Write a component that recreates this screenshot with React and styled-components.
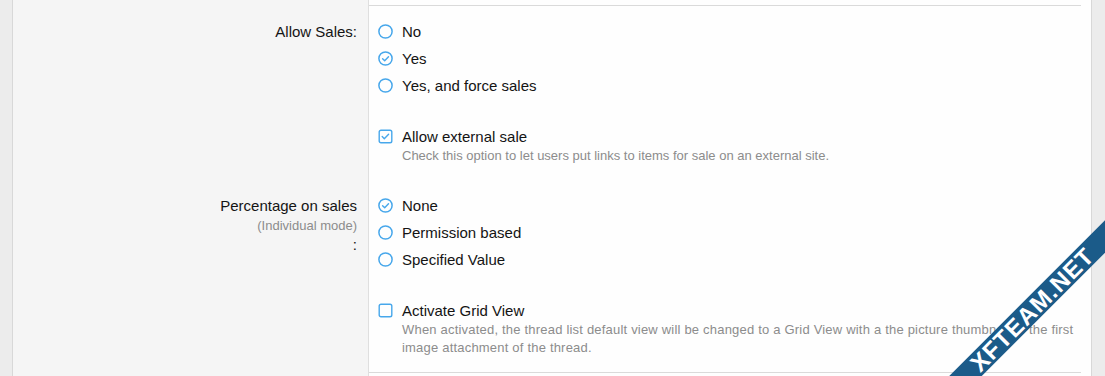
import styled, { createGlobalStyle } from "styled-components";

const GlobalStyle = createGlobalStyle`
  html, body {
    margin: 0;
    padding: 0;
    background: #ececec;
  }
  body {
    font-family: "Liberation Sans", Arial, sans-serif;
    color: #141414;
    overflow: hidden;
  }
`;

const BLUE = "#47a7eb";

const Page = styled.div`
  position: relative;
  width: 1105px;
  height: 376px;
  overflow: hidden;
  padding-left: 12px;
  box-sizing: border-box;
`;

const Block = styled.div`
  width: 1080px;
  height: 100%;
  box-sizing: border-box;
  background: #fefefe;
  border-left: 1px solid #d8d8d8;
  border-right: 1px solid #d8d8d8;
  display: flex;
  flex-direction: column;
`;

const Row = styled.div`
  display: grid;
  grid-template-columns: 356px 1fr;
  flex: ${p => (p.$grow ? "1" : "none")};
  height: ${p => (p.$h ? `${p.$h}px` : "auto")};
`;

const Term = styled.div`
  background: #f5f5f5;
  border-right: 1px solid #dfdfdf;
  box-sizing: border-box;
  padding: ${p => (p.$flat ? "0" : "12px 11px 12px 0")};
  text-align: right;
`;

const TermLabel = styled.div`
  font-size: 15px;
  line-height: 20px;
  padding-top: 4px;
`;

const TermHint = styled.div`
  font-size: 13px;
  line-height: 18px;
  color: #8c8c8c;
  margin-top: 1px;
`;

const TermColon = styled.div`
  font-size: 15px;
  line-height: 20px;
`;

const Desc = styled.div`
  padding: 12px 10px 12px 9px;
  min-width: 0;
`;

const Rule = styled.div`
  height: 1px;
  background: #dadada;
  margin-right: 10px;
`;

const ChoiceList = styled.ul`
  list-style: none;
  margin: 0;
  padding: 0;
`;

const Choice = styled.li`
  display: flex;
  align-items: flex-start;
  padding: 4px 0 3px;
`;

const IconBox = styled.svg`
  flex: none;
  width: 15px;
  height: 15px;
  margin-top: 2px;
  margin-right: 9px;
`;

const ChoiceText = styled.div`
  flex: 1;
  min-width: 0;
`;

const ChoiceLabel = styled.div`
  font-size: 15px;
  line-height: 20px;
`;

const Hint = styled.div`
  font-size: 13px;
  line-height: 18px;
  color: #8c8c8c;
  letter-spacing: ${p => (p.$wide ? "0.2px" : "0")};
`;

const Banner = styled.div`
  position: absolute;
  left: 882px;
  top: 298px;
  width: 300px;
  height: 23px;
  background: #1b5b89;
  color: #ffffff;
  font-family: "Liberation Sans", Arial, sans-serif;
  font-weight: bold;
  font-size: 24px;
  line-height: 24px;
  letter-spacing: 1px;
  text-align: center;
  transform: rotate(-45deg);
  transform-origin: 50% 50%;
  pointer-events: none;
`;

function Radio({ checked }) {
  return (
    <IconBox viewBox="0 0 15 15">
      <circle cx="7.5" cy="7.5" r="6.6" fill="none" stroke={BLUE} strokeWidth="1.5" />
      {checked && (
        <path d="M4.6 7.7 L6.7 9.8 L10.5 5.7" fill="none" stroke={BLUE} strokeWidth="1.4" strokeLinecap="round" strokeLinejoin="round" />
      )}
    </IconBox>
  );
}

function Checkbox({ checked }) {
  return (
    <IconBox viewBox="0 0 15 15">
      <rect x="1.2" y="1.2" width="12.6" height="12.6" rx="1.8" fill="none" stroke={BLUE} strokeWidth="1.4" />
      {checked && (
        <path d="M4.2 7.6 L6.3 9.7 L10.6 5.2" fill="none" stroke={BLUE} strokeWidth="1.4" strokeLinecap="round" strokeLinejoin="round" />
      )}
    </IconBox>
  );
}

function Option({ type, checked, label, hint, wide }) {
  return (
    <Choice>
      {type === "checkbox" ? <Checkbox checked={checked} /> : <Radio checked={checked} />}
      <ChoiceText>
        <ChoiceLabel>{label}</ChoiceLabel>
        {hint && <Hint $wide={wide}>{hint}</Hint>}
      </ChoiceText>
    </Choice>
  );
}

export default function App() {
  return (
    <>
      <GlobalStyle />
      <Page>
        <Block>
          <Row $h={5}>
            <Term $flat />
            <div />
          </Row>
          <Row>
            <Term $flat />
            <Rule />
          </Row>

          <Row>
            <Term>
              <TermLabel>Allow Sales:</TermLabel>
            </Term>
            <Desc>
              <ChoiceList>
                <Option label="No" />
                <Option label="Yes" checked />
                <Option label="Yes, and force sales" />
              </ChoiceList>
            </Desc>
          </Row>

          <Row>
            <Term />
            <Desc>
              <ChoiceList>
                <Option
                  type="checkbox"
                  checked
                  label="Allow external sale"
                  hint="Check this option to let users put links to items for sale on an external site."
                />
              </ChoiceList>
            </Desc>
          </Row>

          <Row>
            <Term>
              <TermLabel>Percentage on sales</TermLabel>
              <TermHint>(Individual mode)</TermHint>
              <TermColon>:</TermColon>
            </Term>
            <Desc>
              <ChoiceList>
                <Option label="None" checked />
                <Option label="Permission based" />
                <Option label="Specified Value" />
              </ChoiceList>
            </Desc>
          </Row>

          <Row>
            <Term />
            <Desc>
              <ChoiceList>
                <Option
                  type="checkbox"
                  wide
                  label="Activate Grid View"
                  hint="When activated, the thread list default view will be changed to a Grid View with a the picture thumbnail of the first image attachment of the thread."
                />
              </ChoiceList>
            </Desc>
          </Row>

          <Row>
            <Term $flat />
            <Rule />
          </Row>
          <Row $grow>
            <Term $flat />
            <div />
          </Row>
        </Block>
        <Banner>XFTEAM.NET</Banner>
      </Page>
    </>
  );
}
